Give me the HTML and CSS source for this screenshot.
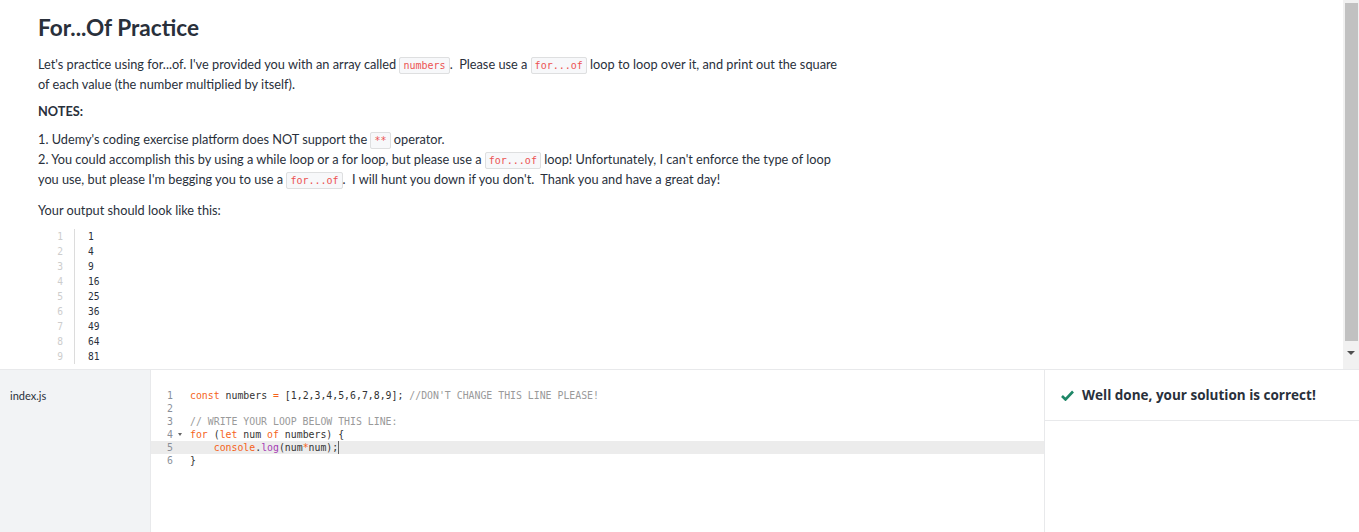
FILE: index.html
```html
<!DOCTYPE html>
<html>
<head>
<meta charset="utf-8">
<link rel="stylesheet" href="styles.css">
</head>
<body>
<div class="app">
  <div class="top">
    <div class="desc">
      <h1 class="title">For...Of Practice</h1>
      <p class="para">Let's practice using for...of. I've provided you with an array called <code class="ic">numbers</code>.&nbsp; Please use a <code class="ic">for...of</code> loop to loop over it, and print out the square of each value (the number multiplied by itself).</p>
      <p class="para notes-h"><strong>NOTES:</strong></p>
      <p class="para notes">1. Udemy's coding exercise platform does NOT support the <code class="ic">**</code> operator.<br>2. You could accomplish this by using a while loop or a for loop, but please use a <code class="ic">for...of</code> loop! Unfortunately, I can't enforce the type of loop you use, but please I'm begging you to use a <code class="ic">for...of</code>.&nbsp; I will hunt you down if you don't.&nbsp; Thank you and have a great day!</p>
      <p class="para out-label">Your output should look like this:</p>
      <div class="out">
        <div class="out-gutter">
          <span>1</span><span>2</span><span>3</span><span>4</span><span>5</span><span>6</span><span>7</span><span>8</span><span>9</span>
        </div>
        <div class="out-lines">
          <span>1</span><span>4</span><span>9</span><span>16</span><span>25</span><span>36</span><span>49</span><span>64</span><span>81</span>
        </div>
      </div>
    </div>
    <div class="sbar">
      <div class="thumb"></div>
      <div class="arrow"></div>
    </div>
  </div>
  <div class="bottom">
    <div class="files">
      <div class="file">index.js</div>
    </div>
    <div class="editor">
      <div class="line"><span class="ln">1</span><span class="code"><span class="kw">const</span> numbers <span class="kw">=</span> [1,2,3,4,5,6,7,8,9]; <span class="cm">//DON'T CHANGE THIS LINE PLEASE!</span></span></div>
      <div class="line"><span class="ln">2</span><span class="code"></span></div>
      <div class="line"><span class="ln">3</span><span class="code"><span class="cm">// WRITE YOUR LOOP BELOW THIS LINE:</span></span></div>
      <div class="line"><span class="ln">4<span class="fold"></span></span><span class="code"><span class="kw">for</span> (<span class="kw">let</span> num <span class="kw">of</span> numbers) {</span></div>
      <div class="line active"><span class="ln">5</span><span class="code">    <span class="kw">console</span>.<span class="fn">log</span>(num<span class="kw">*</span>num);<span class="cursor"></span></span></div>
      <div class="line"><span class="ln">6</span><span class="code">}</span></div>
    </div>
    <div class="result">
      <div class="result-head">
        <svg class="check" width="13" height="11" viewBox="0 0 13 11"><path d="M1 6 L4.5 9.5 L12 1.5" fill="none" stroke="#1e8767" stroke-width="2.6"/></svg>
        <span>Well done, your solution is correct!</span>
      </div>
    </div>
  </div>
</div>
</body>
</html>
```
FILE: styles.css
```css
* { box-sizing: border-box; }
html, body { margin: 0; padding: 0; }
body {
  width: 1359px;
  height: 532px;
  overflow: hidden;
  font-family: "Lato", "Open Sans", sans-serif;
  color: #29303b;
  background: #fff;
}
.app { display: flex; flex-direction: column; height: 532px; }
.top {
  height: 370px;
  display: flex;
  border-bottom: 1px solid #e8e9eb;
}
.desc {
  flex: 1;
  padding: 13px 0 0 38px;
}
.title {
  margin: 0 0 11px;
  font-family: "Lato", sans-serif;
  font-size: 22.6px;
  font-weight: 700;
  line-height: 30px;
  color: #29303b;
}
.para {
  width: 810px;
  margin: 0 0 7px;
  font-size: 12.75px;
  line-height: 20px;
}
.notes-h { margin-bottom: 8px; }
.notes { margin-bottom: 11px; }
.out-label { margin-bottom: 9px; }
.ic {
  font-family: "DejaVu Sans Mono", monospace;
  font-size: 10px;
  line-height: 10px;
  color: #ec5252;
  background: #f7f8fa;
  border: 1px solid #dedfe0;
  border-radius: 2px;
  padding: 2px 3px;
}
.out {
  display: flex;
  font-family: "DejaVu Sans Mono", monospace;
  font-size: 9.6px;
  line-height: 15px;
}
.out-gutter {
  width: 37px;
  padding-right: 11px;
  border-right: 1px solid #dcdcdc;
  color: #cdcdcd;
  text-align: right;
  display: flex;
  flex-direction: column;
}
.out-lines {
  padding-left: 13px;
  display: flex;
  flex-direction: column;
  color: #29303b;
}
.sbar {
  width: 16px;
  background: #f1f1f1;
  display: flex;
  flex-direction: column;
  align-items: center;
  padding-top: 3px;
}
.thumb {
  width: 13px;
  height: 338px;
  background: #c1c1c1;
}
.arrow {
  margin-top: 10px;
  width: 0; height: 0;
  border-left: 4px solid transparent;
  border-right: 4px solid transparent;
  border-top: 4px solid #505050;
}
.bottom { flex: 1; display: flex; }
.files {
  width: 151px;
  background: #f2f3f5;
  border-right: 1px solid #e8e9eb;
  padding-top: 18px;
}
.file {
  padding-left: 10px;
  font-size: 11px;
  line-height: 16px;
}
.editor {
  width: 894px;
  border-right: 1px solid #e8e9eb;
  padding-top: 19px;
  font-family: "DejaVu Sans Mono", monospace;
  font-size: 9.85px;
  line-height: 13px;
  color: #333;
}
.line { display: flex; height: 13px; white-space: pre; }
.line.active { background: #ececec; }
.ln {
  width: 22px;
  color: #8a8f99;
  text-align: right;
  position: relative;
}
.fold {
  position: absolute;
  left: 27px;
  top: 5px;
  border-left: 2.5px solid transparent;
  border-right: 2.5px solid transparent;
  border-top: 3px solid #666;
}
.code { padding-left: 17px; }
.kw { color: #f5631b; }
.cm { color: #9a9a9a; }
.fn { color: #a53db4; }
.cursor { display: inline-block; width: 1px; height: 13px; background: #666; vertical-align: top; }
.result { flex: 1; }
.result-head {
  height: 51px;
  border-bottom: 1px solid #e8e9eb;
  display: flex;
  align-items: center;
  padding-left: 16px;
  gap: 8px;
  font-family: "Open Sans", sans-serif;
  font-size: 13.5px;
  font-weight: 700;
  color: #29303b;
}
.check { margin-top: 1px; }
```
